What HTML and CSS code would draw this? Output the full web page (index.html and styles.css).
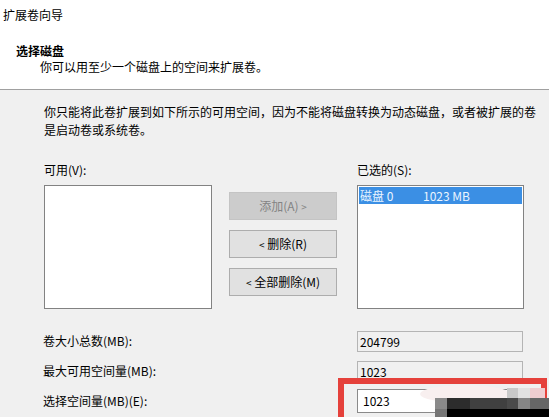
FILE: index.html
```
<!DOCTYPE html>
<html lang="zh-CN">
<head>
<meta charset="utf-8">
<title>扩展卷向导</title>
<link rel="stylesheet" href="styles.css">
</head>
<body>
<div class="dialog">
  <div class="header">
    <div class="title">扩展卷向导</div>
    <div class="heading">选择磁盘</div>
    <div class="sub">你可以用至少一个磁盘上的空间来扩展卷。</div>
  </div>
  <div class="body">
    <p class="note">你只能将此卷扩展到如下所示的可用空间，因为不能将磁盘转换为动态磁盘，或者被扩展的卷<br>是启动卷或系统卷。</p>
    <div class="picker">
      <div class="col col-left">
        <div class="lbl">可用(V):</div>
        <div class="list"></div>
      </div>
      <div class="col col-mid">
        <div class="btn disabled">添加(A) <span class="arr">&gt;</span></div>
        <div class="btn"><span class="arr">&lt;</span> 删除(R)</div>
        <div class="btn"><span class="arr">&lt;</span> 全部删除(M)</div>
      </div>
      <div class="col col-right">
        <div class="lbl">已选的(S):</div>
        <div class="list">
          <div class="item sel"><span class="disk">磁盘 0</span><span>1023 MB</span></div>
        </div>
      </div>
    </div>
    <div class="fields">
      <div class="flabel">卷大小总数(MB):</div>
      <div class="field ro">204799</div>
      <div class="flabel">最大可用空间量(MB):</div>
      <div class="field ro">1023</div>
      <div class="flabel">选择空间量(MB)(E):</div>
      <div class="field edit">1023</div>
    </div>
  </div>
  <div class="highlight"></div>
  <div class="mosaic">
    <div class="blob"></div>
    <div class="px" style="left:87px;top:0;width:11px;height:10px;background:#c9c9c9"></div>
    <div class="px" style="left:98px;top:0;width:12px;height:10px;background:#e2e2e2"></div>
    <div class="px" style="left:110px;top:0;width:15px;height:10px;background:#efcdd0"></div>
    <div class="px" style="left:15px;top:10px;width:12px;height:11px;background:#8a8a8a"></div>
    <div class="px" style="left:27px;top:10px;width:23px;height:11px;background:#2c2c2c"></div>
    <div class="px" style="left:50px;top:10px;width:37px;height:11px;background:#404040"></div>
    <div class="px" style="left:87px;top:10px;width:11px;height:11px;background:#4a4a4a"></div>
    <div class="px" style="left:98px;top:10px;width:12px;height:11px;background:#858585"></div>
    <div class="px" style="left:110px;top:10px;width:19px;height:11px;background:#666"></div>
    <div class="px" style="left:15px;top:21px;width:12px;height:10px;background:#767676"></div>
    <div class="px" style="left:27px;top:21px;width:102px;height:10px;background:#000"></div>
  </div>
</div>
</body>
</html>
```
FILE: styles.css
```
* { box-sizing: border-box; }
html, body {
  margin: 0;
  padding: 0;
  width: 549px;
  height: 417px;
  overflow: hidden;
  background: #f0f0f0;
}
.dialog {
  position: relative;
  width: 549px;
  height: 417px;
  overflow: hidden;
  font-family: "Noto Sans CJK SC", "Noto Sans", sans-serif;
  font-size: 12px;
  line-height: 16px;
  color: #000;
  background: #f0f0f0;
}
.header {
  height: 90px;
  background: #fff;
  border-bottom: 1px solid #a0a0a0;
  padding-top: 7px;
}
.title { padding-left: 3px; }
.heading {
  margin-top: 20px;
  padding-left: 16px;
  font-weight: bold;
}
.sub { padding-left: 40px; }
.body {
  padding: 13px 0 0 44px;
}
.note {
  margin: 0;
  line-height: 18px;
  white-space: nowrap;
}
.picker {
  display: flex;
  margin-top: 23px;
}
.col { display: flex; flex-direction: column; }
.col-left { width: 168px; }
.col-mid {
  width: 108px;
  margin-left: 17px;
  padding-top: 30px;
  gap: 10px;
}
.col-right { width: 167px; margin-left: 20px; }
.lbl { height: 16px; margin-bottom: 7px; }
.list {
  height: 124px;
  background: #fff;
  border: 1px solid #828282;
  padding: 1px;
}
.item {
  display: flex;
  height: 17px;
  line-height: 17px;
  padding-left: 1px;
}
.item.sel {
  background: #3b8fe4;
  color: #eaf4ff;
}
.disk { width: 63px; }
.btn {
  height: 28px;
  line-height: 26px;
  text-align: center;
  background: #e1e1e1;
  border: 1px solid #adadad;
}
.btn.disabled {
  background: #cccccc;
  border-color: #c4c4c4;
  color: #838383;
}
.arr { font-size: 10px; }
.fields {
  display: grid;
  grid-template-columns: 313px 167px;
  grid-auto-rows: 30px;
  align-items: center;
  margin-top: 17px;
  margin-left: -1px;
}
.field {
  height: 21px;
  line-height: 19px;
  padding-left: 2px;
  border: 1px solid #b4b4b4;
  margin-left: 1px;
}
.field.ro { background: #f0f0f0; }
.field.edit {
  height: 24px;
  line-height: 22px;
  background: #fff;
  border-color: #8a8a8a;
  padding-left: 5px;
}
.highlight {
  position: absolute;
  left: 338px;
  top: 378px;
  width: 209px;
  height: 60px;
  border: 6px solid #e5413b;
}
.mosaic {
  position: absolute;
  left: 420px;
  top: 388px;
  width: 129px;
  height: 29px;
}
.blob {
  position: absolute;
  left: 0;
  top: -3px;
  width: 90px;
  height: 18px;
  border-radius: 50%;
  background: #f8efef;
}
.px { position: absolute; }
```
